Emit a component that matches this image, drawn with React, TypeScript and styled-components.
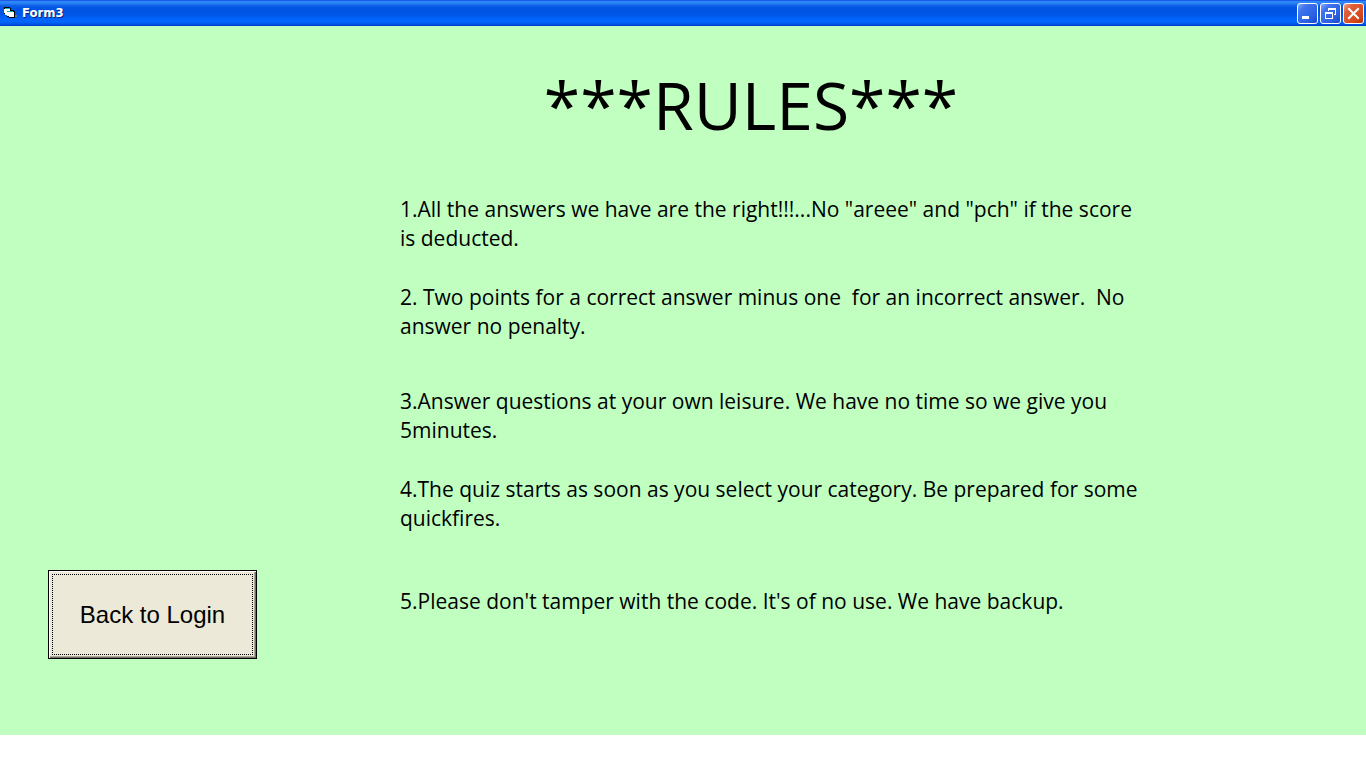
import React from "react";
import styled, { createGlobalStyle } from "styled-components";

const GlobalStyle = createGlobalStyle`
  * { box-sizing: border-box; }
  body { margin: 0; background: #ffffff; }
`;

const Page = styled.div`
  display: flex;
  flex-direction: column;
  min-height: 100vh;
  padding-bottom: 33px;
`;

const TitleBar = styled.header`
  display: flex;
  align-items: center;
  height: 26px;
  padding: 0 2px 0 3px;
  background: linear-gradient(
    to bottom,
    #0831d9 0, #2f86f5 1px, #2b85f8 3px, #0a5ce6 6px, #0054e3 9px,
    #0055e5 14px, #0264fb 19px, #0266fe 22px, #0054e0 24px, #003dd7 26px
  );
`;

const AppIcon = styled.svg`
  width: 14px;
  height: 14px;
  margin-right: 5px;
`;

const Caption = styled.span`
  flex: 1;
  font: bold 13px/18px "DejaVu Sans Condensed", "Noto Sans", sans-serif;
  color: #ffffff;
  text-shadow: 1px 1px 0 #0b1f8c;
`;

const WindowButtons = styled.div`
  display: flex;
  gap: 2px;
`;

const WindowButton = styled.button<{ $close?: boolean }>`
  display: block;
  width: 21px;
  height: 21px;
  padding: 0;
  border: 1px solid #ffffff;
  border-radius: 3px;
  background: ${(p) =>
    p.$close
      ? "linear-gradient(135deg, #f0a58e 0, #e0603a 25%, #d8481d 70%, #b83408 100%)"
      : "linear-gradient(135deg, #86a8f8 0, #3f74ec 25%, #2b60e3 70%, #1746c8 100%)"};

  svg { display: block; width: 19px; height: 19px; }
`;

const Form = styled.main`
  flex: 1;
  display: flex;
  align-items: flex-start;
  background: #c0ffc0;
`;

const Side = styled.aside`
  flex: none;
  align-self: flex-end;
  padding: 0 143px 76px 48px;
`;

const BackButton = styled.button`
  display: block;
  width: 209px;
  height: 89px;
  padding: 3px;
  border: 1px solid #000000;
  background: #ece9d8;
  box-shadow: inset 1px 1px 0 #ffffff, inset -1px -1px 0 #716f64, inset -2px -2px 0 #aca899;
  font: 24px/28px "Liberation Sans", Arial, sans-serif;
  color: #000000;
`;

const FocusFrame = styled.span`
  display: flex;
  align-items: center;
  justify-content: center;
  width: 100%;
  height: 100%;
  border: 1px dotted #000000;
`;

const Content = styled.section`
  width: 740px;
  padding-top: 33px;
  font-family: "Comic Sans MS", "Open Sans", sans-serif;
  color: #000000;
`;

const Heading = styled.h1`
  margin: 0 0 46px;
  padding-right: 38px;
  font-size: 66px;
  line-height: 90px;
  font-weight: 400;
  text-align: center;
`;

const Rule = styled.p<{ $gap: number }>`
  margin: 0 0 ${(p) => p.$gap}px;
  font-size: 21px;
  line-height: 29px;
  white-space: pre-wrap;
`;

const rules = [
  { gap: 30, text: '1.All the answers we have are the right!!!...No "areee" and "pch" if the score is deducted.' },
  { gap: 46, text: "2. Two points for a correct answer minus one  for an incorrect answer.  No answer no penalty." },
  { gap: 30, text: "3.Answer questions at your own leisure. We have no time so we give you 5minutes." },
  { gap: 54, text: "4.The quiz starts as soon as you select your category. Be prepared for some quickfires." },
  { gap: 30, text: "5.Please don't tamper with the code. It's of no use. We have backup." },
];

export default function App() {
  return (
    <Page>
      <GlobalStyle />
      <TitleBar>
        <AppIcon viewBox="0 0 14 14" shapeRendering="crispEdges" aria-hidden="true">
          <path d="M11 9h3v2h-3z" fill="#5c7396" />
          <path d="M1 1h6v1h1v2h3v1h1v7H6v-1H4V9H2V8H1z" fill="#000000" />
          <path d="M1 3h6v2H4v4H2V7H1zM4 6h7v5H6v-1H4z" fill="#ffffff" />
          <path d="M2 2h5v1H2zM4 5h6v1H4z" fill="#16b4b4" />
        </AppIcon>
        <Caption>Form3</Caption>
        <WindowButtons>
          <WindowButton aria-label="Minimize">
            <svg viewBox="0 0 19 19" shapeRendering="crispEdges"><path d="M4 12h7v3H4z" fill="#fff" /></svg>
          </WindowButton>
          <WindowButton aria-label="Restore">
            <svg viewBox="0 0 19 19" shapeRendering="crispEdges">
              <path d="M7 4h8v7h-2v-1h1V6H8v1H7zM4 8h8v7H4zM5 10v4h6v-4z" fill="#fff" fillRule="evenodd" />
            </svg>
          </WindowButton>
          <WindowButton $close aria-label="Close">
            <svg viewBox="0 0 19 19"><path d="M5 5l9 9M14 5l-9 9" stroke="#fff" strokeWidth="2" strokeLinecap="square" /></svg>
          </WindowButton>
        </WindowButtons>
      </TitleBar>
      <Form>
        <Side>
          <BackButton>
            <FocusFrame>Back to Login</FocusFrame>
          </BackButton>
        </Side>
        <Content>
          <Heading>***RULES***</Heading>
          {rules.map((rule) => (
            <Rule key={rule.text} $gap={rule.gap}>{rule.text}</Rule>
          ))}
        </Content>
      </Form>
    </Page>
  );
}
